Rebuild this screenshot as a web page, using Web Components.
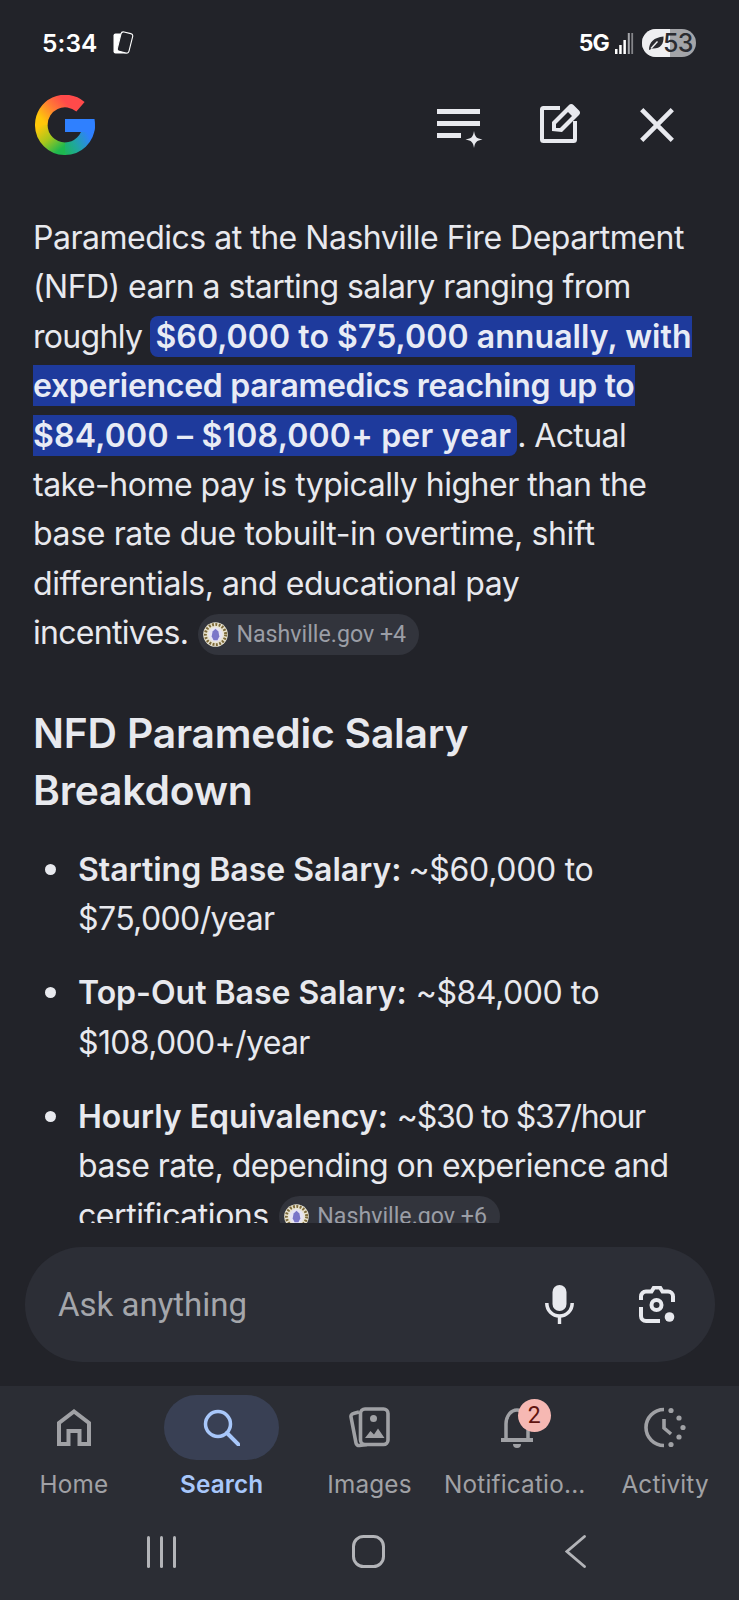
<!DOCTYPE html>
<html><head><meta charset="utf-8">
<style>
html,body{margin:0;padding:0;background:#222329}
body{width:739px;height:1600px;overflow:hidden;font-family:Roboto,"Liberation Sans",sans-serif}
</style></head><body>
<ai-app></ai-app>
<script>
const ic={
 g:`<svg width="60" height="60" viewBox="0 0 60 60" style="flex:none"><defs>
 <linearGradient id="r" gradientUnits="userSpaceOnUse" x1="30" y1="6" x2="8" y2="26"><stop offset="0" stop-color="#ff4a4a"/><stop offset=".45" stop-color="#ff7a35"/><stop offset="1" stop-color="#ffc80a"/></linearGradient>
 <linearGradient id="y" gradientUnits="userSpaceOnUse" x1="6" y1="30" x2="26" y2="54"><stop offset="0" stop-color="#ffc80a"/><stop offset=".5" stop-color="#a6c61c"/><stop offset="1" stop-color="#1eb84f"/></linearGradient>
 <linearGradient id="b" gradientUnits="userSpaceOnUse" x1="26" y1="55" x2="54" y2="40"><stop offset="0" stop-color="#1eb84f"/><stop offset=".45" stop-color="#1fa89a"/><stop offset="1" stop-color="#2f80ff"/></linearGradient></defs>
 <g fill="none" stroke-width="12.600"><path d="M45.500 11.800A23.700 23.700 0 0 0 6.300 30" stroke="url(#r)"/><path d="M6.300 29.500A23.700 23.700 0 0 0 30.500 53.700" stroke="url(#y)"/><path d="M30 53.700A23.700 23.700 0 0 0 53.700 31" stroke="url(#b)"/></g>
 <path d="M30 24h29.500c.4 2 .5 4 .5 6 0 3-.4 5-1.200 7H30z" fill="#2f80ff"/></svg>`
};
class StatusBar extends HTMLElement{constructor(){super();this.attachShadow({mode:'open'}).innerHTML=`<style>
:host{display:flex;align-items:center;justify-content:space-between;height:32px;padding:27px 43px 0 42px;color:#fff}
.l,.r{display:flex;align-items:center}
.t{font:600 24.500px/32px Inter,Roboto,sans-serif;letter-spacing:.1px}
.n{font:700 23px/32px Inter,Roboto,sans-serif;letter-spacing:-.8px}
.b{position:relative;width:54px;height:28px;border-radius:14px;overflow:hidden;background:#a3a4a8;margin-left:8px;color:#2a2b30;font:500 25px/28px Inter,sans-serif;display:flex;letter-spacing:-.6px}
.f{position:absolute;left:0;top:0;bottom:0;width:28px;background:#efeff1}
.b span{position:relative;margin-left:21px}
.b svg{position:absolute;left:5px;top:7px}
</style><div class="l"><span class="t">5:34</span>
<svg style="margin-left:15px" width="22" height="24" viewBox="0 0 22 24"><rect x="0.500" y="2.500" width="14" height="20" rx="2" fill="#fff"/><rect x="6" y="1.500" width="12" height="20" rx="2.500" transform="rotate(14 12 11.500)" fill="#222329" stroke="#fff" stroke-width="1.100"/></svg></div>
<div class="r"><span class="n">5G</span>
<svg style="margin-left:6px" width="19" height="21" viewBox="0 0 19 21"><g fill="#fff"><rect x="0" y="16" width="2.500" height="5"/><rect x="4.200" y="12" width="2.500" height="9"/><rect x="8.400" y="7" width="2.500" height="14"/></g><rect x="12.800" y="0" width="2" height="21" fill="#a5a6aa"/><rect x="16.300" y="0" width="1.800" height="21" fill="#838488"/></svg>
<div class="b"><i class="f"></i><svg width="17" height="15" viewBox="0 0 17 15"><path d="M2 14C2 6 7 1.500 16.500.500c.5 8-3.500 12.500-11 12L2 14z" fill="#2a2b30"/><path d="M4 12.500l6.500-7" stroke="#efeff1" stroke-width="1.400"/></svg><span>53</span></div></div>`}}
customElements.define('status-bar',StatusBar);
class TopBar extends HTMLElement{constructor(){super();this.attachShadow({mode:'open'}).innerHTML=`<style>
:host{display:flex;align-items:flex-start;height:60px;padding:36px 0 0 35px;position:relative}
.s{flex:1}
.i{display:flex;color:#e8e9ee}
</style>${ic.g}<div class="s"></div>
<div class="i" style="margin:14px 57px 0 0"><svg width="46" height="39" viewBox="0 0 46 39"><g fill="#e8e9ee"><rect x="0" y="0" width="43" height="5"/><rect x="0" y="12" width="43" height="5"/><rect x="0" y="24" width="24" height="5"/><path d="M37 22c1 6 2.500 7.500 8.500 8.500C39.500 31.500 38 33 37 39c-1-6-2.500-7.500-8.500-8.500C34.500 29.500 36 28 37 22z"/></g></svg></div>
<div class="i" style="margin:8px 59px 0 0"><svg width="41" height="40" viewBox="0 0 41 40"><path d="M20 5H3.500a1.500 1.500 0 0 0-1.500 1.500V36.500A1.500 1.500 0 0 0 3.500 38h30a1.500 1.500 0 0 0 1.500-1.500V18" fill="none" stroke="#e8e9ee" stroke-width="4"/><path d="M12 28v-9L29 2a3 3 0 0 1 4.500 0l5.500 5.500a3 3 0 0 1 0 4.500L22 29z" fill="#e8e9ee"/><path d="M16 25v-4l12-12 4 4-12 12z" fill="#222329"/></svg></div>
<div class="i" style="margin:13px 65px 0 0"><svg width="34" height="34" viewBox="0 0 34 34"><path d="M1.700 1.700l30.600 30.600M32.300 1.700L1.700 32.300" stroke="#e8e9ee" stroke-width="4.600" fill="none"/></svg></div>`}}
customElements.define('top-bar',TopBar);
class SourceChip extends HTMLElement{constructor(){super();this.attachShadow({mode:'open'}).innerHTML=`<style>
:host{display:inline-flex;align-items:center;height:41px;border-radius:21px;background:#32343c;padding:0 13px 0 5px;color:#9b9ea6;font:400 23.200px/41px Roboto,sans-serif;vertical-align:middle;margin-left:2px;position:relative;top:-1px;letter-spacing:0}
svg{margin-right:8px;flex:none}
</style><svg width="25" height="25" viewBox="0 0 26 26"><circle cx="13" cy="13" r="12.800" fill="#e9e4d2"/><circle cx="13" cy="13" r="10.500" fill="none" stroke="#7d6a3a" stroke-width="3" stroke-dasharray="2 1.500"/><circle cx="13" cy="13" r="7.500" fill="#e6e4f4"/><path d="M13 7l3 3 1 5-2 4h-4l-2-4 1-5z" fill="#7a76c8"/></svg><slot></slot>`}}
customElements.define('source-chip',SourceChip);
class AnswerPane extends HTMLElement{constructor(){super();this.attachShadow({mode:'open'}).innerHTML=`<style>
:host{display:block;height:1068px;padding:0 33px;overflow:hidden;color:#e8e9ee;font:400 32px/49.400px Inter,Roboto,sans-serif;box-sizing:border-box}
p{margin:0;padding-top:58px;letter-spacing:-.35px}
mark{background:#1e3a9c;color:#e8ebf5;font-weight:600;border-radius:8px;padding:1px 6px 1px 5px}
h2{font:600 40.800px/57px Inter,Roboto,sans-serif;margin:47px 0 0;letter-spacing:-.2px;color:#e8e9ee}
ul{margin:26px 0 0;padding:0 0 0 45px;list-style:none}
li{position:relative;margin-bottom:24.800px}
li::before{content:"";position:absolute;left:-33px;top:19px;width:11px;height:11px;border-radius:50%;background:#e8e9ee}
b{font-weight:600}
</style>
<p><span style="letter-spacing:-.49px">Paramedics at the Nashville Fire Department</span><br><span style="letter-spacing:-.57px">(NFD) earn a starting salary ranging from</span><br><span style="letter-spacing:-.7px">roughly </span><mark><span style="letter-spacing:.08px">$60,000 to $75,000 annually, with</span><br><span style="letter-spacing:-.3px">experienced paramedics reaching up to</span><br><span style="letter-spacing:.22px">$84,000 – $108,000+ per year</span></mark><span style="letter-spacing:-.6px">. Actual</span><br><span style="letter-spacing:-.5px">take-home pay is typically higher than the</span><br>base rate due tobuilt-in overtime, shift<br><span style="letter-spacing:-.44px">differentials, and educational pay</span><br><span style="letter-spacing:-.7px">incentives. </span><source-chip>Nashville.gov +4</source-chip></p>
<h2>NFD Paramedic Salary<br>Breakdown</h2>
<ul>
<li><b>Starting Base Salary:</b> <span style="letter-spacing:-.3px;margin-left:-2px">~$60,000 to</span><br><span style="letter-spacing:-.6px">$75,000/year</span></li>
<li><b>Top-Out Base Salary:</b> <span style="letter-spacing:-.45px">~$84,000 to</span><br><span style="letter-spacing:-.65px">$108,000+/year</span></li>
<li><b>Hourly Equivalency:</b> <span style="letter-spacing:-1.25px">~$30 to $37/hour</span><br><span style="letter-spacing:-.53px">base rate, depending on experience and</span><br><span style="letter-spacing:-.45px">certifications </span><source-chip>Nashville.gov +6</source-chip></li>
</ul>`}}
customElements.define('answer-pane',AnswerPane);
class AskBar extends HTMLElement{constructor(){super();this.attachShadow({mode:'open'}).innerHTML=`<style>
:host{display:flex;align-items:center;box-sizing:border-box;height:115px;margin:24px 24px 0 25px;border-radius:58px;background:#2c2e36;padding:0 40px 0 33px;color:#a4a6ab;font:400 33px/115px Roboto,sans-serif}
.s{flex:1}
</style><span>Ask anything</span><div class="s"></div>
<svg width="29" height="39" viewBox="0 0 29 39" style="margin-right:65px"><rect x="7.500" y="0" width="14" height="26" rx="7" fill="#e8e9ee"/><path d="M1.800 18c0 7.500 5.500 13 12.700 13s12.700-5.500 12.700-13" fill="none" stroke="#e8e9ee" stroke-width="3.500"/><rect x="12.800" y="30" width="3.400" height="9" fill="#e8e9ee"/></svg>
<svg width="36" height="37" viewBox="0 0 36 37"><path d="M2 14v-3.500A5 5 0 0 1 7 5.500h5.500L15 1.500h6l2.500 4h5.500a5 5 0 0 1 5 5V16" fill="none" stroke="#e8e9ee" stroke-width="4"/><path d="M2 21v9a5 5 0 0 0 5 5h14" fill="none" stroke="#e8e9ee" stroke-width="4"/><circle cx="17.500" cy="19" r="5" fill="none" stroke="#e8e9ee" stroke-width="4"/><circle cx="30.500" cy="31" r="4.800" fill="#e8e9ee"/></svg>`}}
customElements.define('ask-bar',AskBar);
class NavItem extends HTMLElement{connectedCallback(){const a=this.hasAttribute('active');this.attachShadow({mode:'open'}).innerHTML=`<style>
:host{display:flex;flex-direction:column;align-items:center;flex:1 1 0;position:relative;white-space:nowrap;min-width:0}
.p{width:115px;height:65px;border-radius:33px;display:flex;align-items:center;justify-content:center;background:${a?'#394054':'transparent'};position:relative}
.l{font:${a?600:400} 24.300px/32px Inter,Roboto,sans-serif;color:${a?'#a8c7fa':'#a0a1a5'};margin:8px var(--lx,0px) 0 0;letter-spacing:var(--ls,.15px)}
::slotted(.badge){position:absolute;left:58px;top:4px;width:33px;height:33px;border-radius:50%;background:#f6b8b3;color:#601410;font:400 23px/33px Roboto,sans-serif;text-align:center}
</style><div class="p"><slot></slot></div><div class="l">${this.getAttribute('label')}</div>`}}
customElements.define('nav-item',NavItem);
class BottomNav extends HTMLElement{constructor(){super();this.attachShadow({mode:'open'}).innerHTML=`<style>
:host{display:block;box-sizing:border-box;height:214px;margin-top:24px;background:#2b2d34;padding-top:9px}
.r{display:flex}
.nb{display:flex;align-items:center;padding:0 0 0 147px;height:33px;margin-top:34px}
</style><div class="r">
<nav-item label="Home"><svg width="34" height="37" viewBox="0 0 34 37"><path d="M2 35V14L17 2.500 32 14v21h-9.500V22h-11v13z" fill="none" stroke="#a0a1a5" stroke-width="4"/></svg></nav-item>
<nav-item label="Search" active><svg width="37" height="37" viewBox="0 0 37 37"><circle cx="15" cy="15" r="12.500" fill="none" stroke="#a8c7fa" stroke-width="3.500"/><path d="M24 24l12 12" stroke="#a8c7fa" stroke-width="4" stroke-linecap="round"/></svg></nav-item>
<nav-item label="Images"><svg width="41" height="41" viewBox="0 0 41 41"><path d="M10 5L4.500 6.500a3 3 0 0 0-2.500 3.500L7 36a3 3 0 0 0 3.500 2.500L18 37.500" fill="none" stroke="#a0a1a5" stroke-width="3.600"/><rect x="11.500" y="2" width="27.500" height="35.500" rx="4.500" fill="#2b2d34" stroke="#a0a1a5" stroke-width="3.600"/><circle cx="24.500" cy="11.500" r="3.500" fill="#a0a1a5"/><path d="M16 31l5.500-7 3.500 3.500 4-6 6.500 9.500z" fill="#a0a1a5"/></svg></nav-item>
<nav-item label="Notificatio..." style="--lx:5px;--ls:.2px"><svg width="32" height="40" viewBox="0 0 32 40"><path d="M5 32V16C5 8 10 2 16 2s11 6 11 14v16" fill="none" stroke="#a0a1a5" stroke-width="3.500"/><rect x="0" y="30" width="32" height="4" fill="#a0a1a5"/><path d="M12 36h8a4 4 0 0 1-8 0z" fill="#a0a1a5"/></svg><div class="badge">2</div></nav-item>
<nav-item label="Activity"><svg width="42" height="41" viewBox="0 0 42 41"><path d="M20 2.500a18 18 0 0 0 0 36" fill="none" stroke="#a0a1a5" stroke-width="3.600"/><g fill="#a0a1a5"><circle cx="27" cy="3.500" r="2.600"/><circle cx="35" cy="11" r="2.600"/><circle cx="39" cy="20.500" r="2.600"/><circle cx="35" cy="30" r="2.600"/><circle cx="27" cy="37.500" r="2.600"/></g><path d="M20 12v9l7 6" fill="none" stroke="#a0a1a5" stroke-width="3.600"/></svg></nav-item>
</div>
<div class="nb" style="margin-top:35px">
<svg width="29" height="32" viewBox="0 0 29 32" style="margin-right:176px"><g fill="#b3b4b8"><rect x="0" y="0" width="3" height="32" rx="1.500"/><rect x="13" y="0" width="3" height="32" rx="1.500"/><rect x="26" y="0" width="3" height="32" rx="1.500"/></g></svg>
<svg width="33" height="33" viewBox="0 0 33 33" style="margin-right:180px"><rect x="1.500" y="1.500" width="30" height="30" rx="10" fill="none" stroke="#b3b4b8" stroke-width="3"/></svg>
<svg width="21" height="33" viewBox="0 0 21 33"><path d="M19.500 1.500L2 16.500l17.500 15" fill="none" stroke="#b3b4b8" stroke-width="2.800" stroke-linecap="round"/></svg>
</div>`}}
customElements.define('bottom-nav',BottomNav);
class AiApp extends HTMLElement{constructor(){super();this.attachShadow({mode:'open'}).innerHTML=`<style>:host{display:block;width:739px;height:1600px;overflow:hidden;background:#222329}</style>
<status-bar></status-bar><top-bar></top-bar><answer-pane></answer-pane><ask-bar></ask-bar><bottom-nav></bottom-nav>`}}
customElements.define('ai-app',AiApp);
</script></body></html>
